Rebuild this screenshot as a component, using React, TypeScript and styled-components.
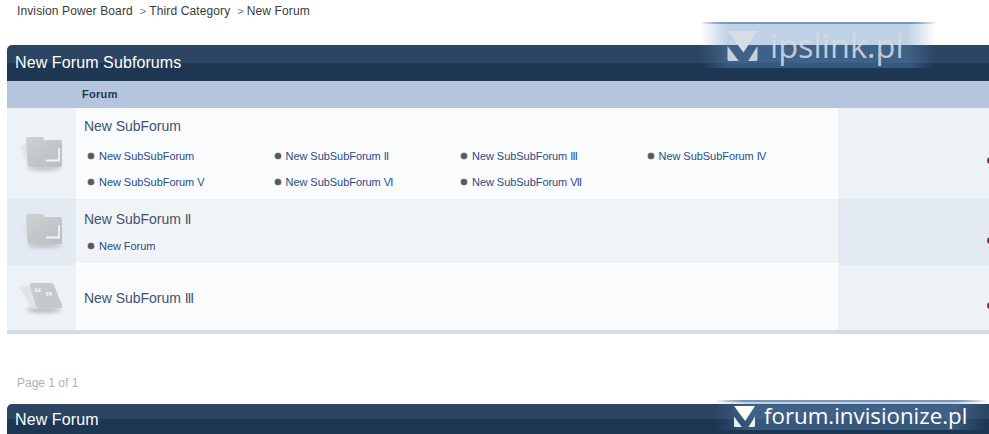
import React from 'react';
import styled, { createGlobalStyle } from 'styled-components';

const Global = createGlobalStyle`
  html, body { margin: 0; padding: 0; background: #fff; overflow: hidden; }
  body { font-family: "Liberation Sans", Arial, sans-serif; font-size: 12px; color: #1d3652; }
`;
const Page = styled.div`
  width: 989px; height: 434px; overflow: hidden; position: relative;
  padding-left: 7px; box-sizing: border-box;
`;
const Crumbs = styled.div`
  height: 45px; box-sizing: border-box; padding: 4px 0 0 10px;
  font-size: 12px; line-height: 14px; color: #3a3a3a; display: flex; letter-spacing: .12px;
`;
const Sep = styled.span`
  color: #777; font-size: 11px; margin: 0 3px 0 7px; letter-spacing: 0;
`;
const Board = styled.section` position: relative; width: 990px; `;
const Title = styled.h2<{ $h: number; $lh?: number }>`
  margin: 0; height: ${p => p.$h}px; line-height: ${p => p.$lh ?? p.$h}px; padding-left: 8px;
  border-radius: 5px 0 0 0; font-weight: 400; font-size: 16px; color: #fff; letter-spacing: .1px;
  background: linear-gradient(#2c4562 0, #2c4562 50%, #1d3652 50%, #1d3652 100%);
`;
const ColHead = styled.div`
  height: 27px; background: #b5c6dc; padding-left: 75px; letter-spacing: .3px;
  font-size: 11px; font-weight: 700; line-height: 27px; color: #1d3652;
`;
const Row = styled.div<{ $h: number; $alt?: boolean; $gap?: number }>`
  display: grid; grid-template-columns: 69px 762px 1fr; height: ${p => p.$h}px;
  margin-bottom: ${p => p.$gap ?? 0}px;
  background: ${p => (p.$alt ? '#f1f4f7' : '#fafbfd')};
`;
const IconCell = styled.div<{ $alt?: boolean; $pt: number }>`
  background: ${p => (p.$alt ? '#e3eaf2' : '#edf2f6')};
  padding: ${p => p.$pt}px 0 0 12px; box-sizing: border-box;
`;
const Main = styled.div<{ $pt: number }>`
  padding: ${p => p.$pt}px 0 0 8px; min-width: 0;
`;
const Stat = styled.div<{ $alt?: boolean; $dot: number }>`
  background: ${p => (p.$alt ? '#e3eaf2' : '#edf2f6')};
  position: relative;
  &::after {
    content: ''; position: absolute; left: 149px; top: ${p => p.$dot}px;
    width: 7px; height: 7px; border-radius: 50%; background: #7a2a55;
  }
`;
const Name = styled.div`
  font-size: 14px; line-height: 18px; color: #415369; letter-spacing: -.03px;
`;
const NameNum = styled.span` letter-spacing: -1.2px; `;
const Subs = styled.ul<{ $mt: number }>`
  list-style: none; margin: ${p => p.$mt}px 0 0 4px; padding: 0;
  display: grid; grid-template-columns: repeat(4, 186.5px); grid-auto-rows: 26px;
`;
const Sub = styled.li`
  display: flex; align-items: center; gap: 5px; font-size: 11px; color: #2b4a85;
  height: 14px; line-height: 14px; letter-spacing: -.05px;
  &::before {
    content: ''; width: 6px; height: 6px; border-radius: 50%; background: #5a5a5a;
    box-shadow: 0 0 0 .6px #a5a5a5;
  }
`;
const SubNum = styled.span` letter-spacing: -.8px; `;
const Bottom = styled.div` height: 4px; background: #d5dee7; `;
const Pager = styled.div`
  height: 70px; box-sizing: border-box; padding: 42px 0 0 10px;
  font-size: 12px; line-height: 14px; color: #b0b0b0;
`;
const Stamp = styled.div<{ $l: number; $t: number; $w: number; $h: number; $pl: number; $gap: number }>`
  position: absolute; left: ${p => p.$l}px; top: ${p => p.$t}px;
  width: ${p => p.$w}px; height: ${p => p.$h}px; box-sizing: border-box;
  padding-left: ${p => p.$pl}px; gap: ${p => p.$gap}px;
  display: flex; align-items: center;
  background: linear-gradient(90deg, rgba(96,140,190,0) 0, rgba(96,140,190,.4) 12%, rgba(96,140,190,.4) 88%, rgba(96,140,190,0) 100%);
  border-top: 2px solid transparent;
  border-image: linear-gradient(90deg, rgba(110,140,175,0), rgba(110,140,175,.85) 10%, rgba(110,140,175,.85) 90%, rgba(110,140,175,0)) 1;
`;
const StampText = styled.span<{ $fs: number; $c: string }>`
  font-family: "Open Sans", sans-serif; font-size: ${p => p.$fs}px; font-weight: 400;
  color: ${p => p.$c}; line-height: 1; white-space: nowrap;
`;

const Folder = () => (
  <svg width="48" height="40" viewBox="0 0 48 40" style={{ display: 'block', overflow: 'visible' }}>
    <defs>
      <filter id="b" x="-30%" y="-100%" width="160%" height="300%"><feGaussianBlur stdDeviation="2.2" /></filter>
      <linearGradient id="fg" x1="0" y1="0" x2="1" y2="1">
        <stop offset="0" stopColor="#cfd2d4" />
        <stop offset=".5" stopColor="#c4c7c9" />
        <stop offset="1" stopColor="#bcbfc2" />
      </linearGradient>
    </defs>
    <ellipse cx="25" cy="31" rx="17" ry="2.6" fill="#9a9a9a" opacity=".6" filter="url(#b)" />
    <path d="M1 9 L8 7 L9 29Z" fill="#e2e5e9" />
    <path d="M7 2 Q7 0 9 0 H23 Q25 0 25 3 H41 Q43 3 43 5 V28 Q43 30 41 30 H11 Q9 30 8.6 28Z" fill="url(#fg)" />
    <path d="M40 11 V23.5 H27" fill="none" stroke="#f1f2f3" strokeWidth="1.8" />
  </svg>
);
const Bubble = () => (
  <svg width="48" height="38" viewBox="0 0 48 38" style={{ display: 'block', overflow: 'visible' }}>
    <defs>
      <filter id="c" x="-30%" y="-100%" width="160%" height="300%"><feGaussianBlur stdDeviation="2" /></filter>
    </defs>
    <ellipse cx="25" cy="31" rx="17" ry="2.4" fill="#888" opacity=".6" filter="url(#c)" />
    <path d="M0 9 L11 6 L21 29 L13 29Z" fill="#e0e4e8" />
    <path d="M11 6 Q11 4 13 4 H32 Q34 4 35 6 L43 26 Q44 29 41 29 H21 Q18 29 17 27Z" fill="#c6c9cb" />
    <text x="15" y="18" fontFamily="Liberation Serif, serif" fontWeight="700" fontSize="15" fill="#f4f5f6">“</text>
    <text x="26" y="23" fontFamily="Liberation Serif, serif" fontWeight="700" fontSize="15" fill="#f4f5f6">”</text>
  </svg>
);
const Mark = ({ w, h, fill }: { w: number; h: number; fill: string }) => (
  <svg width={w} height={h} viewBox="0 0 32 32" style={{ flex: 'none' }}>
    <path d="M0 0 H32 L17 23Z" fill={fill} />
    <path d="M0 16 L12 32 H2 Q0 32 0 30Z M32 16 L22 32 H30 Q32 32 32 30Z" fill={fill} opacity=".9" />
  </svg>
);

const first: [string, string][] = [['New SubSubForum', ''], ['New SubSubForum ', 'II'], ['New SubSubForum ', 'III'], ['New SubSubForum ', 'IV'], ['New SubSubForum ', 'V'], ['New SubSubForum ', 'VI'], ['New SubSubForum ', 'VII']];

export default function App() {
  return (
    <Page>
      <Global />
      <Crumbs>
        <span>Invision Power Board</span><Sep>&gt;</Sep><span>Third Category</span><Sep>&gt;</Sep><span>New Forum</span>
      </Crumbs>
      <Board>
        <Title $h={36}>New Forum Subforums</Title>
        <ColHead>Forum</ColHead>
        <Row $h={90} $gap={1}>
          <IconCell $pt={29}><Folder /></IconCell>
          <Main $pt={9}>
            <Name>New SubForum</Name>
            <Subs $mt={14}>{first.map(([a, b]) => <Sub key={a + b}><span>{a}<SubNum>{b}</SubNum></span></Sub>)}</Subs>
          </Main>
          <Stat $dot={49} />
        </Row>
        <Row $h={64} $alt $gap={2}>
          <IconCell $alt $pt={15}><Folder /></IconCell>
          <Main $pt={11}>
            <Name>New SubForum <NameNum>II</NameNum></Name>
            <Subs $mt={11}><Sub><span>New Forum</span></Sub></Subs>
          </Main>
          <Stat $alt $dot={38} />
        </Row>
        <Row $h={65}>
          <IconCell $pt={14}><Bubble /></IconCell>
          <Main $pt={24}><Name>New SubForum <NameNum>III</NameNum></Name></Main>
          <Stat $dot={37} />
        </Row>
        <Bottom />
        <Pager>Page 1 of 1</Pager>
        <Title $h={30} $lh={31}>New Forum</Title>
      </Board>
      <Stamp $l={700} $t={22} $w={236} $h={46} $pl={27} $gap={12}>
        <Mark w={31} h={30} fill="#d5dde5" />
        <StampText $fs={32.5} $c="rgba(214,222,230,.85)">ipslink.pl</StampText>
      </Stamp>
      <Stamp $l={716} $t={400} $w={270} $h={30} $pl={17} $gap={8}>
        <Mark w={23} h={21} fill="#fff" />
        <StampText $fs={22.3} $c="#fff">forum.invisionize.pl</StampText>
      </Stamp>
    </Page>
  );
}
